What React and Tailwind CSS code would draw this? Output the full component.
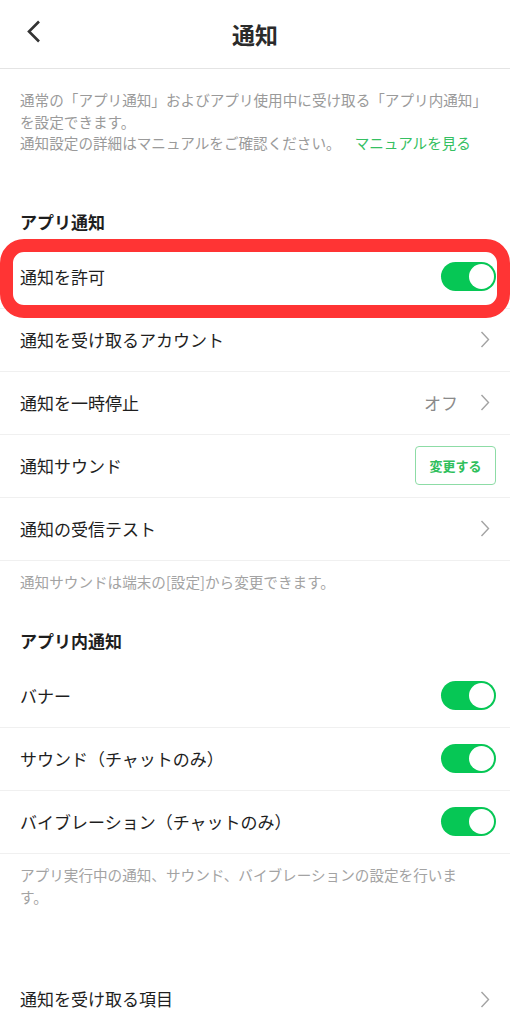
const FONT = { fontFamily: '"Noto Sans CJK JP", "Noto Sans", sans-serif' };

function Toggle() {
  return (
    <div className="flex h-[29px] w-[55px] shrink-0 items-center justify-end rounded-full bg-[#06c755] px-[2px]">
      <div className="h-[25px] w-[25px] rounded-full bg-white" />
    </div>
  );
}

function Chevron() {
  return (
    <svg width="10" height="17" viewBox="0 0 10 17" className="mr-[6px] shrink-0">
      <path d="M1.5 1 L8.5 8.5 L1.5 16" fill="none" stroke="#a3a3a3" strokeWidth="1.4" />
    </svg>
  );
}

function Row({ label, right, border = true }) {
  return (
    <div
      className={
        'flex h-[63px] items-center justify-between pl-5 pr-[14px] ' +
        (border ? 'border-b border-[#f0f0f0]' : '')
      }
    >
      <span className="text-[17px] text-[#1e1e1e]">{label}</span>
      {right}
    </div>
  );
}

function SectionTitle({ children }) {
  return (
    <div className="px-5 text-[17px] font-bold leading-[24px] text-[#1e1e1e]">{children}</div>
  );
}

export default function App() {
  return (
    <div className="min-h-[1024px] w-[510px] overflow-hidden bg-white" style={FONT}>
      {/* Header */}
      <div className="relative flex h-[69px] items-center justify-center border-b border-[#e4e4e4]">
        <svg width="16" height="24" viewBox="0 0 16 24" className="absolute left-[26px] top-[20px]">
          <path d="M13 1.5 L3 11.5 L13 21.5" fill="none" stroke="#333" strokeWidth="2.6" />
        </svg>
        <h1 className="text-[23px] font-bold text-[#2b2b2b]">通知</h1>
      </div>

      {/* Description */}
      <div className="px-5 pt-[20px] text-[14.6px] leading-[21.5px] text-[#9a9a9a]">
        通常の「アプリ通知」およびアプリ使用中に受け取る「アプリ内通知」
        <br />
        を設定できます。
        <br />
        通知設定の詳細はマニュアルをご確認ください。
        <span className="ml-[14px] text-[#35c062]">マニュアルを見る</span>
      </div>

      <div className="mt-[56px]">
        <SectionTitle>アプリ通知</SectionTitle>
      </div>

      <div className="mt-[12px]">
        <div className="relative">
          <Row label="通知を許可" right={<Toggle />} />
          <div className="pointer-events-none absolute -top-[7px] -bottom-[9px] left-0 right-0 rounded-[24px] border-[13px] border-[#ff3434]" />
        </div>
        <Row label="通知を受け取るアカウント" right={<Chevron />} />
        <Row
          label="通知を一時停止"
          right={
            <div className="flex items-center gap-[22px]">
              <span className="text-[17px] text-[#8a8a8a]">オフ</span>
              <Chevron />
            </div>
          }
        />
        <Row
          label="通知サウンド"
          right={
            <button className="flex h-[39px] w-[81px] items-center justify-center rounded-[4px] border border-[#8ddca6] text-[13px] font-bold text-[#2fbf5c]">
              変更する
            </button>
          }
        />
        <Row label="通知の受信テスト" right={<Chevron />} />
      </div>

      <div className="px-5 pt-[10px] text-[14.6px] leading-[22px] text-[#a3a3a3]">
        通知サウンドは端末の[設定]から変更できます。
      </div>

      <div className="mt-[36px]">
        <SectionTitle>アプリ内通知</SectionTitle>
      </div>

      <div className="mt-[12px]">
        <Row label="バナー" right={<Toggle />} />
        <Row label="サウンド（チャットのみ）" right={<Toggle />} />
        <Row label="バイブレーション（チャットのみ）" right={<Toggle />} />
      </div>

      <div className="px-5 pt-[10px] text-[14.6px] leading-[22px] text-[#a3a3a3]">
        アプリ実行中の通知、サウンド、バイブレーションの設定を行いま
        <br />
        す。
      </div>

      <div className="mt-[60px]">
        <Row label="通知を受け取る項目" right={<Chevron />} border={false} />
      </div>
    </div>
  );
}
